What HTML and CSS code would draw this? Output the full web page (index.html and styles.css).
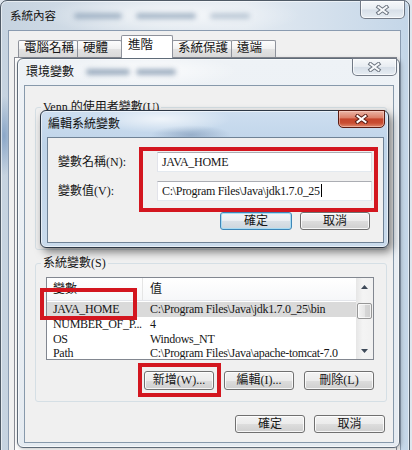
FILE: index.html
```html
<!DOCTYPE html>
<html lang="zh-Hant">
<head>
<meta charset="utf-8">
<title>系統內容</title>
<link rel="stylesheet" href="styles.css">
</head>
<body>
<div class="screen">

  <div class="win outer">
    <div class="titlebar">
      <span class="title title-outer">系統內容</span>
      <span class="ghost ghost-o1"></span>
      <span class="ghost ghost-o2"></span>
      <span class="ghost ghost-o3"></span>
      <div class="close close-outer">
        <svg width="15" height="10" viewBox="0 0 15 10"><path d="M3.5 2 L11.5 8 M11.5 2 L3.5 8" stroke="#6d7580" stroke-width="4" stroke-linecap="square"/><path d="M3.5 2 L11.5 8 M11.5 2 L3.5 8" stroke="#f7f9fb" stroke-width="2" stroke-linecap="square"/></svg>
      </div>
    </div>
    <div class="outer-client">
      <div class="tabs">
        <div class="tab">電腦名稱</div>
        <div class="tab">硬體</div>
        <div class="tab active">進階</div>
        <div class="tab">系統保護</div>
        <div class="tab">遠端</div>
      </div>
      <div class="tabpanel"></div>
    </div>
  </div>

  <div class="win env">
    <div class="titlebar titlebar-env">
      <span class="title">環境變數</span>
      <span class="ghost ghost-e1"></span>
      <span class="ghost ghost-e2"></span>
      <div class="close close-env">
        <svg width="15" height="10" viewBox="0 0 15 10"><path d="M3.5 2 L11.5 8 M11.5 2 L3.5 8" stroke="#6d7580" stroke-width="4" stroke-linecap="square"/><path d="M3.5 2 L11.5 8 M11.5 2 L3.5 8" stroke="#f7f9fb" stroke-width="2" stroke-linecap="square"/></svg>
      </div>
    </div>
    <div class="env-client">
      <fieldset class="group group-user">
        <legend>Venn 的使用者變數(U)</legend>
      </fieldset>
      <fieldset class="group group-sys">
        <legend>系統變數(S)</legend>
        <div class="listbox">
          <div class="list-main">
            <div class="list-head">
              <div class="col1 head-col1">變數</div>
              <div class="col2">值</div>
            </div>
            <div class="rows">
              <div class="row sel"><div class="col1">JAVA_HOME</div><div class="col2">C:\Program Files\Java\jdk1.7.0_25\bin</div></div>
              <div class="row"><div class="col1">NUMBER_OF_P...</div><div class="col2">4</div></div>
              <div class="row"><div class="col1">OS</div><div class="col2">Windows_NT</div></div>
              <div class="row"><div class="col1">Path</div><div class="col2">C:\Program Files\Java\apache-tomcat-7.0</div></div>
            </div>
          </div>
          <div class="vscroll">
            <div class="arrow"><svg width="7" height="4" viewBox="0 0 7 4"><path d="M0 4 L3.5 0 L7 4Z" fill="#3e4a59"/></svg></div>
            <div class="thumb"></div>
            <div class="arrow arrow-down"><svg width="7" height="4" viewBox="0 0 7 4"><path d="M0 0 L3.5 4 L7 0Z" fill="#3e4a59"/></svg></div>
          </div>
        </div>
        <div class="btnrow">
          <div class="btn">新增(W)...</div>
          <div class="btn">編輯(I)...</div>
          <div class="btn">刪除(L)</div>
        </div>
      </fieldset>
      <div class="footer">
        <div class="btn btn-foot">確定</div>
        <div class="btn btn-foot btn-wide">取消</div>
      </div>
    </div>
  </div>

  <div class="win edit">
    <div class="titlebar titlebar-edit">
      <span class="title">編輯系統變數</span>
      <div class="close close-edit">
        <svg width="15" height="10" viewBox="0 0 15 10"><path d="M3.5 2 L11.5 8 M11.5 2 L3.5 8" stroke="#5a1f17" stroke-width="4" stroke-linecap="square"/><path d="M3.5 2 L11.5 8 M11.5 2 L3.5 8" stroke="#ffffff" stroke-width="2" stroke-linecap="square"/></svg>
      </div>
    </div>
    <div class="edit-client">
      <div class="form">
        <div class="label">變數名稱(N):</div>
        <div class="field">JAVA_HOME</div>
        <div class="label">變數值(V):</div>
        <div class="field">C:\Program Files\Java\jdk1.7.0_25<span class="caret"></span></div>
      </div>
      <div class="edit-btns">
        <div class="btn btn-default">確定</div>
        <div class="btn btn-cancel">取消</div>
      </div>
    </div>
  </div>

  <div class="mark mark-edit"></div>
  <div class="mark mark-var"></div>
  <div class="mark mark-add"></div>
</div>
</body>
</html>
```

FILE: styles.css
```css
* { box-sizing: border-box; margin: 0; padding: 0; }

html, body { width: 412px; height: 450px; overflow: hidden; }

body {
  background: #dfe6ee;
  font-family: "Liberation Serif", "Noto Sans CJK TC", serif;
  font-size: 12px;
  color: #161616;
}

.screen { position: relative; width: 412px; height: 450px; overflow: hidden; }

/* ---------- windows ---------- */
.win {
  position: absolute;
  display: flex;
  flex-direction: column;
  border: 1px solid #4f5a66;
  border-radius: 7px;
  box-shadow: inset 0 0 0 1px rgba(255,255,255,0.55);
}

.outer {
  left: 0; top: 0; width: 410px; height: 470px;
  border-radius: 7px 7px 0 0;
  background:
    radial-gradient(ellipse 130px 22px at 170px 14px, rgba(255,255,255,0.75), rgba(255,255,255,0)),
    radial-gradient(ellipse 12px 40px at 3px 135px, rgba(90,130,180,0.55), rgba(90,130,180,0)),
    linear-gradient(to right, #c6d3e0 0%, #d9e2eb 35%, #e3eaf1 60%, #c4d6e8 100%);
}

.titlebar {
  display: flex;
  align-items: center;
  height: 29px;
  flex: none;
  padding-left: 9px;
}

.title {
  font-size: 12px;
  line-height: 16px;
  white-space: nowrap;
  color: #111;
}

.title-outer { font-size: 11.5px; }

.ghost {
  height: 6px;
  border-radius: 3px;
  background: #8ea3b9;
  filter: blur(2.5px);
  opacity: 0.75;
}
.ghost-o1 { width: 48px; margin-left: 18px; }
.ghost-o2 { width: 60px; margin-left: 14px; }
.ghost-o3 { width: 40px; margin-left: 14px; opacity: 0.5; }
.ghost-e1 { width: 44px; margin-left: 12px; background: #7d93ab; }
.ghost-e2 { width: 40px; margin-left: 6px; background: #7d93ab; }

.close {
  margin-left: auto;
  align-self: flex-start;
  margin-top: -1px;
  display: flex;
  align-items: center;
  justify-content: center;
  border: 1px solid rgba(72,82,96,0.75);
  border-radius: 0 0 5px 5px;
  background: linear-gradient(#f6f8fa 0%, #e8edf2 48%, #d7dfe8 52%, #e7edf3 100%);
  box-shadow: inset 0 0 0 1px rgba(255,255,255,0.7);
}
.close-outer { width: 45px; height: 19px; margin-right: 4px; }
.close-env { width: 45px; height: 18px; margin-right: 2px; }
.close-edit {
  width: 47px; height: 18px; margin-right: 3px;
  border-color: #5b1c12;
  background: linear-gradient(#eab5a6 0%, #dc8069 42%, #c5452b 50%, #c94d31 75%, #e08a6e 100%);
  box-shadow: inset 0 0 0 1px rgba(255,220,210,0.45);
}

/* ---------- outer window client ---------- */
.outer-client {
  flex: 1;
  margin: 0 8px 0 7px;
  border: 1px solid #8a9bb0;
  background: #f0f0f0;
  display: flex;
  flex-direction: column;
}

.tabs {
  display: flex;
  align-items: flex-start;
  height: 26px;
  padding: 4px 0 0 9px;
  flex: none;
  position: relative;
  z-index: 1;
}

.tab {
  height: 17px;
  margin-top: 5px;
  margin-right: -1px;
  min-width: 45px;
  padding: 0 3px 0 5px;
  border: 1px solid #8e929b;
  border-bottom: none;
  border-radius: 2px 2px 0 0;
  background: linear-gradient(#fdfdfd 0%, #f1f1f1 50%, #e3e3e3 51%, #d9d9d9 100%);
  font-size: 12.5px;
  line-height: 15px;
  white-space: nowrap;
}

.tab.active {
  height: 23px;
  margin-top: 0;
  min-width: 52px;
  padding-left: 6px;
  background: #fff;
  line-height: 18px;
  position: relative;
  z-index: 2;
}

.tabpanel {
  flex: 1;
  margin: 0 3px 0 5px;
  border: 1px solid #898c95;
  background: #fff;
}

/* ---------- environment variables window ---------- */
.env {
  left: 17px; top: 58px; width: 383px; height: 390px;
  border-color: #5f6b78;
  border-radius: 6px;
  background:
    radial-gradient(ellipse 90px 16px at 130px 12px, rgba(255,255,255,0.8), rgba(255,255,255,0)),
    linear-gradient(#eef2f6 0%, #e5ebf1 100%);
  box-shadow: inset 0 0 0 1px rgba(255,255,255,0.6), 1px 1px 4px rgba(0,0,0,0.25);
}

.titlebar-env { height: 26px; padding-left: 8px; }

.env-client {
  flex: 1;
  margin: 0 5px 4px 6px;
  border: 1px solid #8799ab;
  background: #f0f0f0;
  padding-top: 14px;
  display: flex;
  flex-direction: column;
}

.group {
  border: 1px solid #d5dfe5;
  border-radius: 3px;
  margin: 0 6px 0 10px;
  padding: 0 12px 0 10px;
  min-width: 0;
}

.group legend {
  margin-left: -5px;
  padding: 0 2px;
  font-size: 12px;
  line-height: 14px;
  white-space: nowrap;
}

.group-user { height: 150px; flex: none; }

.group-sys {
  margin-top: 6px;
  padding-top: 7px;
  padding-bottom: 11px;
  flex: none;
}

.listbox {
  height: 83px;
  border: 1px solid #828790;
  background: #fff;
  display: flex;
  overflow: hidden;
}

.list-main { flex: 1; min-width: 0; overflow: hidden; }

.list-head {
  display: flex;
  height: 23px;
  border-bottom: 1px solid #e3e5ea;
  background: linear-gradient(#ffffff, #f6f7f9);
  line-height: 22px;
}

.col1 {
  width: 96px;
  flex: none;
  padding-left: 6px;
  white-space: nowrap;
  overflow: hidden;
}
.head-col1 { border-right: 1px solid #e5e5e5; }

.col2 {
  padding-left: 7px;
  white-space: nowrap;
}

.rows { padding-top: 1px; letter-spacing: -0.3px; }

.row {
  display: flex;
  height: 14.5px;
  line-height: 14px;
}
.row.sel { background: #dadada; height: 15px; line-height: 15px; }

.vscroll {
  width: 17px;
  flex: none;
  display: flex;
  flex-direction: column;
  align-items: center;
  background: linear-gradient(to right, #e6e6e6, #f4f4f4 40%, #f1f1f1);
}

.arrow {
  height: 17px;
  width: 17px;
  display: flex;
  align-items: center;
  justify-content: center;
  flex: none;
}
.arrow-down { margin-top: auto; }

.thumb {
  width: 15px;
  height: 16px;
  margin-top: 8px;
  border: 1px solid #979797;
  border-radius: 2px;
  background: linear-gradient(to right, #f4f4f4, #e6e6e6 50%, #d7d7d7 51%, #d0d0d0);
  box-shadow: inset 0 0 0 1px rgba(255,255,255,0.7);
}

.btnrow {
  display: flex;
  justify-content: flex-end;
  gap: 10px;
  margin-top: 11px;
}

.btn {
  width: 70px;
  height: 19px;
  border: 1px solid #707070;
  border-radius: 3px;
  background: linear-gradient(#f3f3f3 0%, #ebebeb 50%, #dddddd 51%, #cfcfcf 100%);
  box-shadow: inset 0 0 0 1px rgba(255,255,255,0.8);
  font-size: 12px;
  line-height: 17px;
  text-align: center;
  white-space: nowrap;
}

.footer {
  display: flex;
  justify-content: flex-end;
  gap: 9px;
  margin-top: 13px;
  padding-right: 8px;
}
.btn-foot { height: 18px; line-height: 16px; }
.btn-wide { width: 71px; }

/* ---------- edit dialog ---------- */
.edit {
  left: 40px; top: 110px; width: 349px; height: 138px;
  border-color: #2c3745;
  border-radius: 6px;
  background:
    radial-gradient(ellipse 70px 14px at 120px 8px, rgba(255,255,255,0.7), rgba(255,255,255,0)),
    radial-gradient(ellipse 40px 10px at 150px 24px, rgba(70,100,140,0.35), rgba(70,100,140,0)),
    linear-gradient(#cddef0 0%, #bfd4e9 25%, #cadbec 100%);
  box-shadow: inset 0 0 0 1px rgba(255,255,255,0.55), 3px 4px 9px rgba(0,0,0,0.5);
}

.titlebar-edit { height: 26px; padding-left: 7px; }

.edit-client {
  flex: 1;
  margin: 0 4px 4px 6px;
  border: 1px solid #6f8296;
  background: #f0f0f0;
  padding: 14px 11px 0 10px;
}

.form {
  display: grid;
  grid-template-columns: 99px 1fr;
  row-gap: 9px;
  align-items: center;
}

.label {
  line-height: 20px;
  white-space: nowrap;
}

.field {
  height: 20px;
  border: 1px solid;
  border-color: #abadb3 #dbdfe6 #e3e9ef #e2e3ea;
  background: #fff;
  padding-left: 4px;
  line-height: 18px;
  letter-spacing: -0.3px;
  white-space: nowrap;
  overflow: hidden;
}

.caret {
  display: inline-block;
  width: 1px;
  height: 13px;
  margin-left: 1px;
  background: #000;
  vertical-align: -2px;
}

.edit-btns {
  display: flex;
  justify-content: flex-end;
  gap: 8px;
  margin-top: 11px;
  padding-right: 2px;
}

.btn-default {
  width: 72px;
  height: 18px;
  line-height: 16px;
  border-color: #3d87b8;
  background: linear-gradient(#f2f5f7 0%, #e9eef2 50%, #d9e1e7 51%, #cdd6dd 100%);
  box-shadow: inset 0 0 0 1px #a8dcf3;
}
.btn-cancel { height: 18px; line-height: 16px; }

/* ---------- red annotation boxes ---------- */
.mark {
  position: absolute;
  border: 4px solid #d3161f;
}
.mark-edit { left: 139px; top: 147px; width: 239px; height: 65px; }
.mark-var { left: 40px; top: 288px; width: 97px; height: 32px; }
.mark-add { left: 138px; top: 363px; width: 83px; height: 34px; }
```
